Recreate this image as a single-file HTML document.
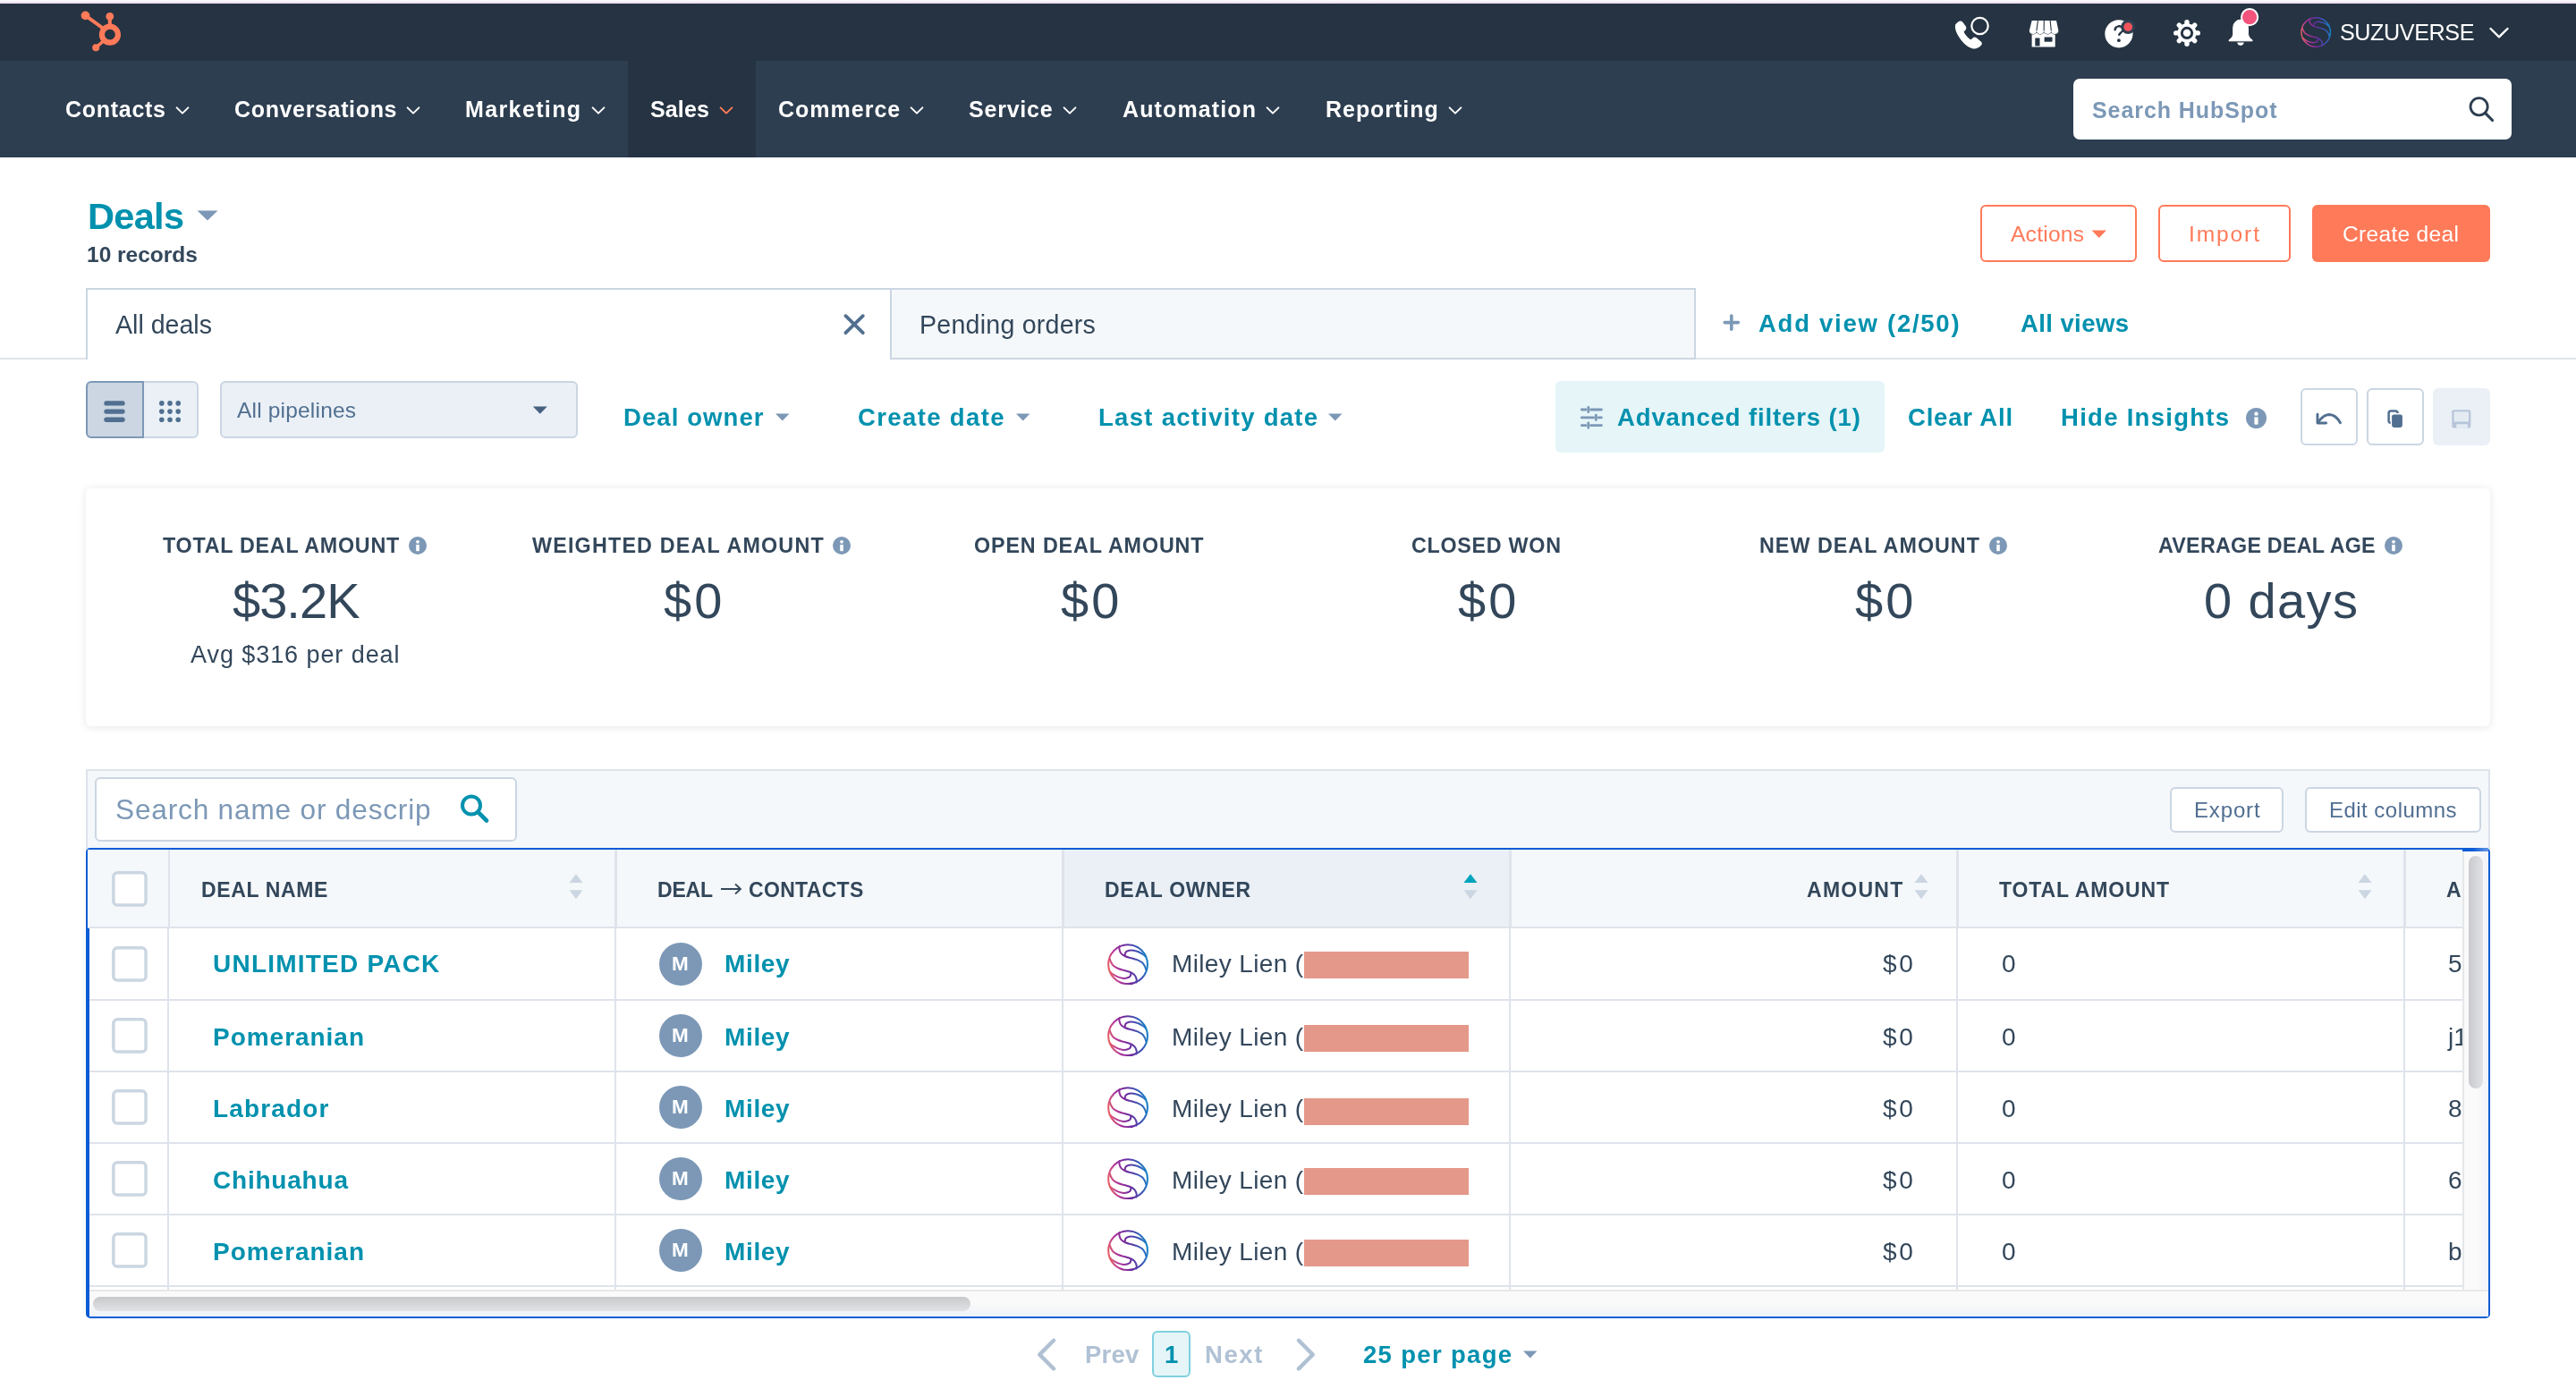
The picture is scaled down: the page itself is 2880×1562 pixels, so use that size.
<!DOCTYPE html>
<html><head><meta charset="utf-8"><title>Deals</title>
<style>
html,body{margin:0;padding:0;}
body{width:2880px;height:1562px;position:relative;overflow:hidden;background:#fff;font-family:"Liberation Sans",sans-serif;}
.a{position:absolute;box-sizing:border-box;display:block;}
.t{position:absolute;white-space:nowrap;display:block;will-change:transform;}
</style></head><body>
<div class="a" style="left:0px;top:0px;width:2880px;height:4px;background:linear-gradient(#fdfbfd 0,#fbf7fb 30%,#efe6f3 60%,#e9e0ee 100%);"></div>
<div class="a" style="left:0px;top:4px;width:2880px;height:64px;background:#253342;"></div>
<div class="a" style="left:0px;top:68px;width:2880px;height:108px;background:#2d3e50;"></div>
<div class="a" style="left:702px;top:68px;width:143px;height:108px;background:#253342;"></div>
<svg class="a" style="left:85px;top:8px;" width="60" height="56" viewBox="0 0 60 56"><g fill="none" stroke="#ff7a59" stroke-linecap="round">
<circle cx="37.9" cy="30.7" r="9" stroke-width="6.2"/>
<line x1="37.8" y1="10.4" x2="37.8" y2="21" stroke-width="4"/>
<line x1="10.5" y1="9.4" x2="30" y2="23.5" stroke-width="4"/>
<line x1="22.2" y1="45.2" x2="30.5" y2="38" stroke-width="3.6"/></g>
<g fill="#ff7a59"><circle cx="37.8" cy="10.4" r="4.4"/><circle cx="10.5" cy="9.4" r="4.9"/><circle cx="22.2" cy="45.2" r="4"/></g></svg>
<span class="t" style="left:73.0px;top:110.0px;font-size:25px;line-height:25px;color:#fff;font-weight:700;letter-spacing:0.72px;">Contacts</span>
<svg class="a" style="left:194.3px;top:117px;" width="20" height="14" viewBox="0 0 20 14"><path d="M3.6 3.4 L10 9.6 L16.4 3.4" fill="none" stroke="#fff" stroke-width="2" stroke-linecap="round" stroke-linejoin="round"/></svg>
<span class="t" style="left:261.6px;top:110.0px;font-size:25px;line-height:25px;color:#fff;font-weight:700;letter-spacing:0.65px;">Conversations</span>
<svg class="a" style="left:452.3px;top:117px;" width="20" height="14" viewBox="0 0 20 14"><path d="M3.6 3.4 L10 9.6 L16.4 3.4" fill="none" stroke="#fff" stroke-width="2" stroke-linecap="round" stroke-linejoin="round"/></svg>
<span class="t" style="left:520.4px;top:110.0px;font-size:25px;line-height:25px;color:#fff;font-weight:700;letter-spacing:1.38px;">Marketing</span>
<svg class="a" style="left:658.8px;top:117px;" width="20" height="14" viewBox="0 0 20 14"><path d="M3.6 3.4 L10 9.6 L16.4 3.4" fill="none" stroke="#fff" stroke-width="2" stroke-linecap="round" stroke-linejoin="round"/></svg>
<span class="t" style="left:726.7px;top:110.0px;font-size:25px;line-height:25px;color:#fff;font-weight:700;letter-spacing:0.14px;">Sales</span>
<svg class="a" style="left:801.9px;top:117px;" width="20" height="14" viewBox="0 0 20 14"><path d="M3.6 3.4 L10 9.6 L16.4 3.4" fill="none" stroke="#ff7a59" stroke-width="2" stroke-linecap="round" stroke-linejoin="round"/></svg>
<span class="t" style="left:869.8px;top:110.0px;font-size:25px;line-height:25px;color:#fff;font-weight:700;letter-spacing:1.00px;">Commerce</span>
<svg class="a" style="left:1015.3px;top:117px;" width="20" height="14" viewBox="0 0 20 14"><path d="M3.6 3.4 L10 9.6 L16.4 3.4" fill="none" stroke="#fff" stroke-width="2" stroke-linecap="round" stroke-linejoin="round"/></svg>
<span class="t" style="left:1083.3px;top:110.0px;font-size:25px;line-height:25px;color:#fff;font-weight:700;letter-spacing:0.79px;">Service</span>
<svg class="a" style="left:1186.3px;top:117px;" width="20" height="14" viewBox="0 0 20 14"><path d="M3.6 3.4 L10 9.6 L16.4 3.4" fill="none" stroke="#fff" stroke-width="2" stroke-linecap="round" stroke-linejoin="round"/></svg>
<span class="t" style="left:1255.0px;top:110.0px;font-size:25px;line-height:25px;color:#fff;font-weight:700;letter-spacing:1.13px;">Automation</span>
<svg class="a" style="left:1413.3px;top:117px;" width="20" height="14" viewBox="0 0 20 14"><path d="M3.6 3.4 L10 9.6 L16.4 3.4" fill="none" stroke="#fff" stroke-width="2" stroke-linecap="round" stroke-linejoin="round"/></svg>
<span class="t" style="left:1482.0px;top:110.0px;font-size:25px;line-height:25px;color:#fff;font-weight:700;letter-spacing:0.96px;">Reporting</span>
<svg class="a" style="left:1617.0px;top:117px;" width="20" height="14" viewBox="0 0 20 14"><path d="M3.6 3.4 L10 9.6 L16.4 3.4" fill="none" stroke="#fff" stroke-width="2" stroke-linecap="round" stroke-linejoin="round"/></svg>
<svg class="a" style="left:2182px;top:14px;" width="46" height="44" viewBox="0 0 46 44"><path d="M4.6 14.2c-.5 3 .6 8.5 5.8 15.3 5 6.5 10.3 9.7 13.6 10.3 2.5.4 6.3-1.300 8.400-3.500 1-1.100 .9-2.300-.1-3.300l-5-4.200c-1.100-.9-2.300-.8-3.300.1l-2.600 2.400c-2.600-1.300-6.900-5.700-8.700-9.700l2.400-2.600c.9-1 1-2.200.1-3.300l-3.600-4.700c-.9-1.100-2.400-1.300-3.500-.4-1.800 1.300-3.200 2.200-3.500 3.600z" fill="#fff" stroke="#fff" stroke-width="1.300" stroke-linejoin="round"/>
<circle cx="31.500" cy="15" r="9.200" fill="#253342" stroke="#fff" stroke-width="2.200"/></svg>
<svg class="a" style="left:2266px;top:20px;" width="38" height="36" viewBox="0 0 38 36"><g fill="#fff"><rect x="5.6" y="16.5" width="26.1" height="16"/>
<path d="M5.6 2.900h27.400l2.400 11.300a4.070 3.700 0 0 1 -8.150 0a4.070 3.700 0 0 1 -8.150 0a4.070 3.700 0 0 1 -8.150 0a4.070 3.700 0 0 1 -8.150 0z" stroke="#253342" stroke-width="1.100" paint-order="stroke"/></g>
<g stroke="#253342" stroke-width="1.100" fill="none"><path d="M12.500 2.500L10.900 14.400M19.300 2.500L19.100 14.400M26.100 2.500L27.300 14.400"/></g>
<g fill="#253342"><rect x="9.300" y="22.500" width="5.200" height="8.900"/><rect x="19.600" y="21.500" width="8.900" height="5.200"/></g></svg>
<svg class="a" style="left:2350px;top:18px;" width="40" height="40" viewBox="0 0 40 40"><circle cx="18.9" cy="19.8" r="15.6" fill="#fff"/>
<path d="M14.6 15.2c.4-2.600 2.300-3.900 4.500-3.900 2.500 0 4.300 1.500 4.300 3.700 0 3.300-4.400 3.500-4.400 7.300" fill="none" stroke="#253342" stroke-width="2.500" stroke-linecap="round" stroke-dasharray="3.400 2.100"/>
<circle cx="18.900" cy="27.200" r="1.900" fill="#253342"/>
<circle cx="29.200" cy="12.100" r="8" fill="#2e3f50"/><circle cx="29.200" cy="12.100" r="4.900" fill="#f2545b"/></svg>
<svg class="a" style="left:2425px;top:17px;" width="40" height="40" viewBox="0 0 40 40"><g transform="translate(20 19.900)"><g stroke="#fff" stroke-width="5.400" stroke-linecap="round"><line x1="0" y1="0" x2="12.30" y2="0.00"/><line x1="0" y1="0" x2="8.70" y2="8.70"/><line x1="0" y1="0" x2="0.00" y2="12.30"/><line x1="0" y1="0" x2="-8.70" y2="8.70"/><line x1="0" y1="0" x2="-12.30" y2="0.00"/><line x1="0" y1="0" x2="-8.70" y2="-8.70"/><line x1="0" y1="0" x2="-0.00" y2="-12.30"/><line x1="0" y1="0" x2="8.70" y2="-8.70"/></g><circle r="10.600" fill="#fff"/><circle r="7.100" fill="#253342"/><circle r="4.200" fill="#fff"/></g></svg>
<svg class="a" style="left:2486px;top:4px;" width="44" height="54" viewBox="0 0 44 54"><path d="M10.700 26.500a8.400 8.400 0 0 1 16.800 0v7c0 3 1.500 5 4.600 7.300v1h-26v-1c3.100-2.300 4.600-4.300 4.600-7.300z" fill="#fff" stroke="#fff" stroke-width="1" stroke-linejoin="round"/>
<path d="M15.300 43.600h7.400c0 2-1.600 3.300-3.700 3.300s-3.700-1.300-3.700-3.300z" fill="#fff"/>
<circle cx="29.100" cy="15.200" r="9.100" fill="#f2547d" stroke="#fff" stroke-width="2"/></svg>
<svg class="a" style="left:2569px;top:16px;" width="40" height="40" viewBox="0 0 40 40"><defs><linearGradient id="g0" gradientUnits="userSpaceOnUse" x1="-17" y1="3" x2="17" y2="-3"><stop offset="0" stop-color="#ea635e"/><stop offset=".22" stop-color="#b5379a"/><stop offset=".5" stop-color="#6e2a9d"/><stop offset=".78" stop-color="#3a55b4"/><stop offset="1" stop-color="#1488c9"/></linearGradient></defs>
<g transform="translate(20.2 20) scale(1.0000)" fill="none" stroke="url(#g0)" stroke-width="1.5" stroke-linecap="round"><circle cx="0" cy="0" r="16.250"/><path d="M-6.97 -15.00C-7.00 -14.57 -7.37 -13.41 -7.14 -12.41C-6.91 -11.41 -6.43 -9.97 -5.61 -9.01C-4.79 -8.05 -3.63 -7.28 -2.21 -6.63C-0.79 -5.98 1.19 -5.61 2.89 -5.10C4.59 -4.59 6.46 -4.22 7.99 -3.57C9.52 -2.92 11.02 -2.15 12.07 -1.19C13.12 -0.23 13.81 1.31 14.28 2.21C14.75 3.11 14.80 3.87 14.90 4.20M-2.55 -7.00C-2.44 -7.50 -2.44 -9.30 -1.87 -10.03C-1.30 -10.76 -0.23 -11.13 0.85 -11.39C1.93 -11.65 3.29 -11.73 4.59 -11.56C5.89 -11.39 7.37 -10.91 8.67 -10.37C9.97 -9.83 11.42 -8.99 12.41 -8.33C13.40 -7.67 14.23 -6.72 14.60 -6.40M6.97 15.00C7.00 14.57 7.37 13.41 7.14 12.41C6.91 11.41 6.43 9.97 5.61 9.01C4.79 8.05 3.63 7.28 2.21 6.63C0.79 5.98 -1.19 5.61 -2.89 5.10C-4.59 4.59 -6.46 4.22 -7.99 3.57C-9.52 2.92 -11.02 2.15 -12.07 1.19C-13.12 0.23 -13.81 -1.31 -14.28 -2.21C-14.75 -3.11 -14.80 -3.87 -14.90 -4.20M2.55 7.00C2.44 7.50 2.44 9.30 1.87 10.03C1.30 10.76 0.23 11.13 -0.85 11.39C-1.93 11.65 -3.29 11.73 -4.59 11.56C-5.89 11.39 -7.37 10.91 -8.67 10.37C-9.97 9.83 -11.42 8.99 -12.41 8.33C-13.40 7.67 -14.23 6.72 -14.60 6.40"/></g></svg>
<span class="t" style="left:2616.0px;top:24.0px;font-size:25.2px;line-height:25.2px;color:#fff;letter-spacing:-0.44px;">SUZUVERSE</span>
<svg class="a" style="left:2780px;top:28px;" width="28" height="18" viewBox="0 0 28 18"><path d="M4.500 4 L14 13.300 L23.500 4" fill="none" stroke="#fff" stroke-width="2.400" stroke-linecap="round" stroke-linejoin="round"/></svg>
<div class="a" style="left:2318px;top:88px;width:490px;height:68px;background:#fff;border-radius:7px;"></div>
<span class="t" style="left:2339.0px;top:110.8px;font-size:25px;line-height:25px;color:#7c98b6;font-weight:700;letter-spacing:0.93px;">Search HubSpot</span>
<svg class="a" style="left:2756px;top:104px;" width="36" height="36" viewBox="0 0 36 36"><circle cx="15.600" cy="15.300" r="9.600" fill="none" stroke="#2d3e50" stroke-width="2.800"/><line x1="22.500" y1="22.300" x2="30.500" y2="30.500" stroke="#2d3e50" stroke-width="3.200" stroke-linecap="round"/></svg>
<span class="t" style="left:97.5px;top:220.9px;font-size:41.5px;line-height:41.5px;color:#0091ae;font-weight:700;letter-spacing:-0.69px;">Deals</span>
<svg class="a" style="left:220px;top:234px;" width="24" height="14" viewBox="0 0 24 14"><path d="M0.500 1.500h23l-11.500 11z" fill="#7c98b6"/></svg>
<span class="t" style="left:96.5px;top:273.3px;font-size:24.5px;line-height:24.5px;color:#33475b;font-weight:700;">10 records</span>
<div class="a" style="left:2214px;top:229px;width:175px;height:64px;border:2px solid #ff7a59;border-radius:6px;background:#fff;"></div>
<span class="t" style="left:2248.0px;top:249.5px;font-size:24.6px;line-height:24.6px;color:#ff7a59;letter-spacing:0.22px;">Actions</span>
<svg class="a" style="left:2337px;top:256px;" width="20" height="12" viewBox="0 0 20 12"><path d="M1.500 1.500h16.500l-8.250 8.500z" fill="#ff7a59"/></svg>
<div class="a" style="left:2413px;top:229px;width:148px;height:64px;border:2px solid #ff7a59;border-radius:6px;background:#fff;"></div>
<span class="t" style="left:2447.4px;top:249.5px;font-size:24.6px;line-height:24.6px;color:#ff7a59;letter-spacing:1.86px;">Import</span>
<div class="a" style="left:2585px;top:229px;width:199px;height:64px;background:#ff7a59;border-radius:6px;"></div>
<span class="t" style="left:2619.0px;top:249.5px;font-size:24.6px;line-height:24.6px;color:#fff;letter-spacing:0.28px;">Create deal</span>
<div class="a" style="left:0px;top:400px;width:2880px;height:2px;background:#dfe3eb;"></div>
<div class="a" style="left:96px;top:322px;width:901px;height:80px;background:#fff;border:2px solid #cbd6e2;border-bottom:none;"></div>
<div class="a" style="left:997px;top:322px;width:899px;height:80px;background:#f5f8fa;border:2px solid #cbd6e2;border-left:none;"></div>
<span class="t" style="left:128.5px;top:349.0px;font-size:28.6px;line-height:28.6px;color:#33475b;letter-spacing:-0.01px;">All deals</span>
<svg class="a" style="left:940px;top:348px;" width="30" height="30" viewBox="0 0 30 30"><path d="M5.400 5.200L24.800 24.200M24.800 5.200L5.400 24.200" stroke="#516f90" stroke-width="3.800" stroke-linecap="round"/></svg>
<span class="t" style="left:1028.0px;top:349.0px;font-size:28.6px;line-height:28.6px;color:#33475b;letter-spacing:0.23px;">Pending orders</span>
<svg class="a" style="left:1922px;top:347px;" width="28" height="28" viewBox="0 0 28 28"><path d="M13.800 6V21.200M6.200 13.600H21.400" stroke="#7c98b6" stroke-width="3.600" stroke-linecap="round"/></svg>
<span class="t" style="left:1965.8px;top:348.0px;font-size:27.5px;line-height:27.5px;color:#0091ae;font-weight:700;letter-spacing:1.74px;">Add view (2/50)</span>
<span class="t" style="left:2258.6px;top:348.0px;font-size:27.5px;line-height:27.5px;color:#0091ae;font-weight:700;letter-spacing:0.41px;">All views</span>
<div class="a" style="left:96px;top:426px;width:65px;height:64px;background:#cbd6e2;border:2px solid #7c98b6;border-radius:6px 0 0 6px;"></div>
<div class="a" style="left:161px;top:426px;width:61px;height:64px;background:#eaf0f6;border:2px solid #cbd6e2;border-left:none;border-radius:0 6px 6px 0;"></div>
<svg class="a" style="left:114px;top:446px;" width="28" height="28" viewBox="0 0 28 28"><g stroke="#516f90" stroke-width="5.400" stroke-linecap="round"><line x1="5" y1="4.900" x2="23" y2="4.900"/><line x1="5" y1="14.100" x2="23" y2="14.100"/><line x1="5" y1="23.300" x2="23" y2="23.300"/></g></svg>
<svg class="a" style="left:177px;top:446px;" width="28" height="30" viewBox="0 0 28 30"><g fill="#516f90"><circle cx="3.8" cy="4.9" r="2.800"/><circle cx="3.8" cy="14.1" r="2.800"/><circle cx="3.8" cy="23.299999999999997" r="2.800"/><circle cx="13.0" cy="4.9" r="2.800"/><circle cx="13.0" cy="14.1" r="2.800"/><circle cx="13.0" cy="23.299999999999997" r="2.800"/><circle cx="22.2" cy="4.9" r="2.800"/><circle cx="22.2" cy="14.1" r="2.800"/><circle cx="22.2" cy="23.299999999999997" r="2.800"/></g></svg>
<div class="a" style="left:246px;top:426px;width:400px;height:64px;background:#eaf0f6;border:2px solid #cbd6e2;border-radius:6px;"></div>
<span class="t" style="left:264.5px;top:446.8px;font-size:24.5px;line-height:24.5px;color:#516f90;letter-spacing:0.19px;">All pipelines</span>
<svg class="a" style="left:594px;top:452.5px;" width="20" height="12" viewBox="0 0 20 12"><path d="M1.800 1.500h16l-8 8.300z" fill="#45617f"/></svg>
<span class="t" style="left:696.5px;top:452.7px;font-size:27.5px;line-height:27.5px;color:#0091ae;font-weight:700;letter-spacing:1.09px;">Deal owner</span>
<svg class="a" style="left:866px;top:461px;" width="18" height="11" viewBox="0 0 18 11"><path d="M1 1.500h15.500l-7.750 8z" fill="#7c98b6"/></svg>
<span class="t" style="left:958.5px;top:452.7px;font-size:27.5px;line-height:27.5px;color:#0091ae;font-weight:700;letter-spacing:1.37px;">Create date</span>
<svg class="a" style="left:1135px;top:461px;" width="18" height="11" viewBox="0 0 18 11"><path d="M1 1.500h15.500l-7.750 8z" fill="#7c98b6"/></svg>
<span class="t" style="left:1227.5px;top:452.7px;font-size:27.5px;line-height:27.5px;color:#0091ae;font-weight:700;letter-spacing:1.29px;">Last activity date</span>
<svg class="a" style="left:1484px;top:461px;" width="18" height="11" viewBox="0 0 18 11"><path d="M1 1.500h15.500l-7.750 8z" fill="#7c98b6"/></svg>
<div class="a" style="left:1739px;top:426px;width:368px;height:80px;background:#e5f5f8;border-radius:6px;"></div>
<svg class="a" style="left:1766px;top:452px;" width="28" height="28" viewBox="0 0 28 28"><g stroke="#7c98b6" stroke-width="2.800" stroke-linecap="round" fill="none">
<path d="M2.300 6H7M12.600 6H24.500M2.300 14.900H15.600M21 14.900H24.500M2.300 23.600H7M12.600 23.600H24.500"/>
<path d="M9.800 3.300V8.700M18.300 12.200V17.600M9.800 20.900V26.300"/></g></svg>
<span class="t" style="left:1808.4px;top:452.7px;font-size:27.5px;line-height:27.5px;color:#0091ae;font-weight:700;letter-spacing:0.88px;">Advanced filters (1)</span>
<span class="t" style="left:2132.5px;top:452.7px;font-size:27.5px;line-height:27.5px;color:#0091ae;font-weight:700;letter-spacing:0.81px;">Clear All</span>
<span class="t" style="left:2304.0px;top:452.7px;font-size:27.5px;line-height:27.5px;color:#0091ae;font-weight:700;letter-spacing:1.28px;">Hide Insights</span>
<svg class="a" style="left:2509.5px;top:454.5px;" width="25.0" height="25.0" viewBox="0 0 25.0 25.0"><circle cx="12.5" cy="12.5" r="11.5" fill="#7c98b6"/><circle cx="12.5" cy="7.67" r="2.19" fill="#fff"/><rect x="10.43" y="11.35" width="4.14" height="8.28" fill="#fff"/></svg>
<div class="a" style="left:2572px;top:434px;width:64px;height:64px;background:#fff;border:2px solid #cbd6e2;border-radius:6px;"></div>
<div class="a" style="left:2646px;top:434px;width:64px;height:64px;background:#fff;border:2px solid #cbd6e2;border-radius:6px;"></div>
<div class="a" style="left:2720px;top:434px;width:64px;height:64px;background:#eaf0f6;border-radius:6px;"></div>
<svg class="a" style="left:2588px;top:452px;" width="32" height="28" viewBox="0 0 32 28"><g fill="none" stroke="#516f90" stroke-width="2.900" stroke-linecap="round" stroke-linejoin="round"><path d="M3 11.200V21H12.600"/><path d="M3.600 20.300Q9.500 11.600 16 11.500Q23.500 11.600 28.500 20.800"/></g></svg>
<svg class="a" style="left:2663px;top:450px;" width="30" height="32" viewBox="0 0 30 32"><rect x="7.600" y="9.400" width="10" height="13.500" rx="2.600" fill="none" stroke="#516f90" stroke-width="2.500"/><rect x="10.400" y="12.700" width="13.200" height="15.900" rx="3" fill="#516f90" stroke="#fff" stroke-width="1.400"/></svg>
<svg class="a" style="left:2737px;top:451px;" width="30" height="30" viewBox="0 0 30 30"><path d="M6.300 7.200H23.300Q25.300 7.200 25.300 9.200V25.600Q25.300 27.600 23.300 27.600H6.300Q4.300 27.600 4.300 25.600V9.200Q4.300 7.200 6.300 7.200Z" fill="#b7c5da"/><rect x="6.600" y="9.300" width="16.400" height="11.200" fill="#e4ebf3"/><rect x="9.300" y="23.300" width="12.600" height="4.400" fill="#e4ebf3"/></svg>
<div class="a" style="left:96px;top:546px;width:2688px;height:266px;background:#fff;border-radius:6px;box-shadow:0 1px 8px 1px rgba(45,62,80,.10);"></div>
<span class="t" style="left:181.7px;top:598.7px;font-size:23.3px;line-height:23.3px;color:#33475b;font-weight:700;letter-spacing:0.74px;">TOTAL DEAL AMOUNT</span>
<svg class="a" style="left:455.5px;top:599.4px;" width="22" height="22" viewBox="0 0 22 22"><circle cx="11" cy="11" r="10" fill="#7c98b6"/><circle cx="11" cy="6.80" r="1.90" fill="#fff"/><rect x="9.20" y="10.00" width="3.60" height="7.20" fill="#fff"/></svg>
<span class="t" style="left:259.8px;top:644.2px;font-size:56px;line-height:56px;color:#33475b;letter-spacing:-0.96px;">$3.2K</span>
<span class="t" style="left:595.0px;top:598.7px;font-size:23.3px;line-height:23.3px;color:#33475b;font-weight:700;letter-spacing:1.20px;">WEIGHTED DEAL AMOUNT</span>
<svg class="a" style="left:930.1px;top:599.4px;" width="22" height="22" viewBox="0 0 22 22"><circle cx="11" cy="11" r="10" fill="#7c98b6"/><circle cx="11" cy="6.80" r="1.90" fill="#fff"/><rect x="9.20" y="10.00" width="3.60" height="7.20" fill="#fff"/></svg>
<span class="t" style="left:742.2px;top:644.2px;font-size:56px;line-height:56px;color:#33475b;letter-spacing:3.21px;">$0</span>
<span class="t" style="left:1089.4px;top:598.7px;font-size:23.3px;line-height:23.3px;color:#33475b;font-weight:700;letter-spacing:0.88px;">OPEN DEAL AMOUNT</span>
<span class="t" style="left:1186.2px;top:644.2px;font-size:56px;line-height:56px;color:#33475b;letter-spacing:3.21px;">$0</span>
<span class="t" style="left:1578.0px;top:598.7px;font-size:23.3px;line-height:23.3px;color:#33475b;font-weight:700;letter-spacing:0.72px;">CLOSED WON</span>
<span class="t" style="left:1630.2px;top:644.2px;font-size:56px;line-height:56px;color:#33475b;letter-spacing:3.21px;">$0</span>
<span class="t" style="left:1967.0px;top:598.7px;font-size:23.3px;line-height:23.3px;color:#33475b;font-weight:700;letter-spacing:1.02px;">NEW DEAL AMOUNT</span>
<svg class="a" style="left:2222.5px;top:599.4px;" width="22" height="22" viewBox="0 0 22 22"><circle cx="11" cy="11" r="10" fill="#7c98b6"/><circle cx="11" cy="6.80" r="1.90" fill="#fff"/><rect x="9.20" y="10.00" width="3.60" height="7.20" fill="#fff"/></svg>
<span class="t" style="left:2074.2px;top:644.2px;font-size:56px;line-height:56px;color:#33475b;letter-spacing:3.21px;">$0</span>
<span class="t" style="left:2412.6px;top:598.7px;font-size:23.3px;line-height:23.3px;color:#33475b;font-weight:700;letter-spacing:0.24px;">AVERAGE DEAL AGE</span>
<svg class="a" style="left:2664.8px;top:599.4px;" width="22" height="22" viewBox="0 0 22 22"><circle cx="11" cy="11" r="10" fill="#7c98b6"/><circle cx="11" cy="6.80" r="1.90" fill="#fff"/><rect x="9.20" y="10.00" width="3.60" height="7.20" fill="#fff"/></svg>
<span class="t" style="left:2463.8px;top:644.2px;font-size:56px;line-height:56px;color:#33475b;letter-spacing:1.40px;">0 days</span>
<span class="t" style="left:213.2px;top:719.4px;font-size:27px;line-height:27px;color:#33475b;letter-spacing:0.93px;">Avg $316 per deal</span>
<div class="a" style="left:96px;top:860px;width:2688px;height:92px;background:#f5f8fa;border:2px solid #dfe3eb;border-bottom:none;"></div>
<div class="a" style="left:106px;top:869px;width:472px;height:72px;background:#fff;border:2px solid #cbd6e2;border-radius:6px;"></div>
<div class="a" style="left:129px;top:880px;width:351px;height:50px;overflow:hidden;">
<span class="t" style="left:0.0px;top:10.3px;font-size:31.6px;line-height:31.6px;color:#7c98b6;letter-spacing:0.82px;">Search name or description</span>
</div>
<svg class="a" style="left:511px;top:885.3px;" width="40" height="40" viewBox="0 0 40 40"><circle cx="16" cy="15.500" r="10" fill="none" stroke="#0091ae" stroke-width="4"/><line x1="23.500" y1="23" x2="33" y2="32.500" stroke="#0091ae" stroke-width="4.600" stroke-linecap="round"/></svg>
<div class="a" style="left:2426px;top:879.5px;width:127px;height:51px;background:#fff;border:2px solid #cbd6e2;border-radius:6px;"></div>
<span class="t" style="left:2453.0px;top:893.7px;font-size:24px;line-height:24px;color:#506e91;letter-spacing:0.85px;">Export</span>
<div class="a" style="left:2577px;top:879.5px;width:197px;height:51px;background:#fff;border:2px solid #cbd6e2;border-radius:6px;"></div>
<span class="t" style="left:2604.3px;top:893.7px;font-size:24px;line-height:24px;color:#506e91;letter-spacing:0.47px;">Edit columns</span>
<div class="a" style="left:96px;top:948px;width:2688px;height:526px;background:#fff;border:2px solid #0b5cd6;border-left-width:4px;border-radius:5px;"></div>
<div class="a" style="left:98px;top:950px;width:2655px;height:87px;background:#f5f8fa;"></div>
<div class="a" style="left:1188px;top:950px;width:500px;height:87px;background:#eaf0f6;"></div>
<div class="a" style="left:98px;top:1036px;width:2655px;height:2px;background:#dfe3eb;"></div>
<div class="a" style="left:100px;top:1117px;width:2653px;height:2px;background:#dfe3eb;"></div>
<div class="a" style="left:100px;top:1197px;width:2653px;height:2px;background:#dfe3eb;"></div>
<div class="a" style="left:100px;top:1277px;width:2653px;height:2px;background:#dfe3eb;"></div>
<div class="a" style="left:100px;top:1357px;width:2653px;height:2px;background:#dfe3eb;"></div>
<div class="a" style="left:100px;top:1437px;width:2653px;height:2px;background:#dfe3eb;"></div>
<div class="a" style="left:188px;top:950px;width:2px;height:87px;background:#dfe3eb;"></div>
<div class="a" style="left:187px;top:1037px;width:2px;height:405px;background:#dfe3eb;"></div>
<div class="a" style="left:687px;top:950px;width:3px;height:87px;background:#dfe3eb;"></div>
<div class="a" style="left:687px;top:1037px;width:2px;height:405px;background:#dfe3eb;"></div>
<div class="a" style="left:1187px;top:950px;width:3px;height:87px;background:#dfe3eb;"></div>
<div class="a" style="left:1187px;top:1037px;width:2px;height:405px;background:#dfe3eb;"></div>
<div class="a" style="left:1687px;top:950px;width:3px;height:87px;background:#dfe3eb;"></div>
<div class="a" style="left:1687px;top:1037px;width:2px;height:405px;background:#dfe3eb;"></div>
<div class="a" style="left:2187px;top:950px;width:3px;height:87px;background:#dfe3eb;"></div>
<div class="a" style="left:2187px;top:1037px;width:2px;height:405px;background:#dfe3eb;"></div>
<div class="a" style="left:2687px;top:950px;width:3px;height:87px;background:#dfe3eb;"></div>
<div class="a" style="left:2687px;top:1037px;width:2px;height:405px;background:#dfe3eb;"></div>
<svg class="a" style="left:125px;top:974px;" width="40" height="40" viewBox="0 0 40 40"><rect x="1.85" y="1.85" width="36.2" height="36.2" rx="4.4" fill="#fff" stroke="#cbd6e2" stroke-width="3.5"/></svg>
<span class="t" style="left:224.7px;top:984.0px;font-size:23px;line-height:23px;color:#33475b;font-weight:700;letter-spacing:0.62px;">DEAL NAME</span>
<svg class="a" style="left:636px;top:976px;" width="16" height="31" viewBox="0 0 16 31"><path d="M8 1.200L15.500 11.100H0.500z" fill="#cbd6e2"/><path d="M0.500 19.300H15.500L8 29.300z" fill="#cbd6e2"/></svg>
<span class="t" style="left:734.5px;top:984.0px;font-size:23px;line-height:23px;color:#33475b;font-weight:700;letter-spacing:-0.20px;">DEAL</span>
<svg class="a" style="left:805px;top:984px;" width="26" height="20" viewBox="0 0 26 20"><path d="M1 10h22M17 4.500l6 5.500-6 5.500" fill="none" stroke="#33475b" stroke-width="1.800"/></svg>
<span class="t" style="left:837.0px;top:984.0px;font-size:23px;line-height:23px;color:#33475b;font-weight:700;letter-spacing:0.32px;">CONTACTS</span>
<span class="t" style="left:1234.8px;top:984.0px;font-size:23px;line-height:23px;color:#33475b;font-weight:700;letter-spacing:0.72px;">DEAL OWNER</span>
<svg class="a" style="left:1636px;top:976px;" width="16" height="31" viewBox="0 0 16 31"><path d="M8 1.200L15.500 11.100H0.500z" fill="#00a4bd"/><path d="M0.500 19.300H15.500L8 29.300z" fill="#cbd6e2"/></svg>
<span class="t" style="left:2020.2px;top:984.0px;font-size:23px;line-height:23px;color:#33475b;font-weight:700;letter-spacing:1.27px;">AMOUNT</span>
<svg class="a" style="left:2140px;top:976px;" width="16" height="31" viewBox="0 0 16 31"><path d="M8 1.200L15.500 11.100H0.500z" fill="#cbd6e2"/><path d="M0.500 19.300H15.500L8 29.300z" fill="#cbd6e2"/></svg>
<span class="t" style="left:2234.9px;top:984.0px;font-size:23px;line-height:23px;color:#33475b;font-weight:700;letter-spacing:0.86px;">TOTAL AMOUNT</span>
<svg class="a" style="left:2636px;top:976px;" width="16" height="31" viewBox="0 0 16 31"><path d="M8 1.200L15.500 11.100H0.500z" fill="#cbd6e2"/><path d="M0.500 19.300H15.500L8 29.300z" fill="#cbd6e2"/></svg>
<span class="t" style="left:2734.6px;top:984.0px;font-size:23px;line-height:23px;color:#33475b;font-weight:700;">A</span>
<svg class="a" style="left:125px;top:1058.0px;" width="40" height="40" viewBox="0 0 40 40"><rect x="1.85" y="1.85" width="36.2" height="36.2" rx="4.4" fill="#fff" stroke="#cbd6e2" stroke-width="3.5"/></svg>
<span class="t" style="left:238.0px;top:1064.0px;font-size:28px;line-height:28px;color:#0091ae;font-weight:700;letter-spacing:1.22px;">UNLIMITED PACK</span>
<div class="a" style="left:737px;top:1053.8px;width:48px;height:48px;border-radius:50%;background:#7c98b6;"></div>
<span class="t" style="left:751.4px;top:1067.4px;font-size:22.5px;line-height:22.5px;color:#fff;font-weight:700;">M</span>
<span class="t" style="left:810.0px;top:1064.0px;font-size:28px;line-height:28px;color:#0091ae;font-weight:700;letter-spacing:0.64px;">Miley</span>
<svg class="a" style="left:1236px;top:1052.8px;" width="50" height="50" viewBox="0 0 50 50"><defs><linearGradient id="g1" gradientUnits="userSpaceOnUse" x1="-17" y1="3" x2="17" y2="-3"><stop offset="0" stop-color="#ea635e"/><stop offset=".22" stop-color="#b5379a"/><stop offset=".5" stop-color="#6e2a9d"/><stop offset=".78" stop-color="#3a55b4"/><stop offset="1" stop-color="#1488c9"/></linearGradient></defs>
<g transform="translate(25.05 25.2) scale(1.3471)" fill="none" stroke="url(#g1)" stroke-width="1.5" stroke-linecap="round"><circle cx="0" cy="0" r="16.250"/><path d="M-6.97 -15.00C-7.00 -14.57 -7.37 -13.41 -7.14 -12.41C-6.91 -11.41 -6.43 -9.97 -5.61 -9.01C-4.79 -8.05 -3.63 -7.28 -2.21 -6.63C-0.79 -5.98 1.19 -5.61 2.89 -5.10C4.59 -4.59 6.46 -4.22 7.99 -3.57C9.52 -2.92 11.02 -2.15 12.07 -1.19C13.12 -0.23 13.81 1.31 14.28 2.21C14.75 3.11 14.80 3.87 14.90 4.20M-2.55 -7.00C-2.44 -7.50 -2.44 -9.30 -1.87 -10.03C-1.30 -10.76 -0.23 -11.13 0.85 -11.39C1.93 -11.65 3.29 -11.73 4.59 -11.56C5.89 -11.39 7.37 -10.91 8.67 -10.37C9.97 -9.83 11.42 -8.99 12.41 -8.33C13.40 -7.67 14.23 -6.72 14.60 -6.40M6.97 15.00C7.00 14.57 7.37 13.41 7.14 12.41C6.91 11.41 6.43 9.97 5.61 9.01C4.79 8.05 3.63 7.28 2.21 6.63C0.79 5.98 -1.19 5.61 -2.89 5.10C-4.59 4.59 -6.46 4.22 -7.99 3.57C-9.52 2.92 -11.02 2.15 -12.07 1.19C-13.12 0.23 -13.81 -1.31 -14.28 -2.21C-14.75 -3.11 -14.80 -3.87 -14.90 -4.20M2.55 7.00C2.44 7.50 2.44 9.30 1.87 10.03C1.30 10.76 0.23 11.13 -0.85 11.39C-1.93 11.65 -3.29 11.73 -4.59 11.56C-5.89 11.39 -7.37 10.91 -8.67 10.37C-9.97 9.83 -11.42 8.99 -12.41 8.33C-13.40 7.67 -14.23 6.72 -14.60 6.40"/></g></svg>
<span class="t" style="left:1309.7px;top:1064.0px;font-size:28px;line-height:28px;color:#33475b;letter-spacing:0.35px;">Miley Lien (</span>
<div class="a" style="left:1458px;top:1064.2px;width:184px;height:29.6px;background:#e4988a;"></div>
<span class="t" style="left:2105.0px;top:1064.0px;font-size:28px;line-height:28px;color:#33475b;letter-spacing:2.56px;">$0</span>
<span class="t" style="left:2237.7px;top:1064.0px;font-size:28px;line-height:28px;color:#33475b;">0</span>
<div class="a" style="left:2700px;top:1047.7px;width:52.500px;height:60px;overflow:hidden;">
<span class="t" style="left:36.8px;top:16.3px;font-size:28px;line-height:28px;color:#33475b;">5</span>
</div>
<svg class="a" style="left:125px;top:1138.0px;" width="40" height="40" viewBox="0 0 40 40"><rect x="1.85" y="1.85" width="36.2" height="36.2" rx="4.4" fill="#fff" stroke="#cbd6e2" stroke-width="3.5"/></svg>
<span class="t" style="left:238.0px;top:1145.9px;font-size:28px;line-height:28px;color:#0091ae;font-weight:700;letter-spacing:0.97px;">Pomeranian</span>
<div class="a" style="left:737px;top:1133.8px;width:48px;height:48px;border-radius:50%;background:#7c98b6;"></div>
<span class="t" style="left:751.4px;top:1147.4px;font-size:22.5px;line-height:22.5px;color:#fff;font-weight:700;">M</span>
<span class="t" style="left:810.0px;top:1145.9px;font-size:28px;line-height:28px;color:#0091ae;font-weight:700;letter-spacing:0.64px;">Miley</span>
<svg class="a" style="left:1236px;top:1132.8px;" width="50" height="50" viewBox="0 0 50 50"><defs><linearGradient id="g2" gradientUnits="userSpaceOnUse" x1="-17" y1="3" x2="17" y2="-3"><stop offset="0" stop-color="#ea635e"/><stop offset=".22" stop-color="#b5379a"/><stop offset=".5" stop-color="#6e2a9d"/><stop offset=".78" stop-color="#3a55b4"/><stop offset="1" stop-color="#1488c9"/></linearGradient></defs>
<g transform="translate(25.05 25.2) scale(1.3471)" fill="none" stroke="url(#g2)" stroke-width="1.5" stroke-linecap="round"><circle cx="0" cy="0" r="16.250"/><path d="M-6.97 -15.00C-7.00 -14.57 -7.37 -13.41 -7.14 -12.41C-6.91 -11.41 -6.43 -9.97 -5.61 -9.01C-4.79 -8.05 -3.63 -7.28 -2.21 -6.63C-0.79 -5.98 1.19 -5.61 2.89 -5.10C4.59 -4.59 6.46 -4.22 7.99 -3.57C9.52 -2.92 11.02 -2.15 12.07 -1.19C13.12 -0.23 13.81 1.31 14.28 2.21C14.75 3.11 14.80 3.87 14.90 4.20M-2.55 -7.00C-2.44 -7.50 -2.44 -9.30 -1.87 -10.03C-1.30 -10.76 -0.23 -11.13 0.85 -11.39C1.93 -11.65 3.29 -11.73 4.59 -11.56C5.89 -11.39 7.37 -10.91 8.67 -10.37C9.97 -9.83 11.42 -8.99 12.41 -8.33C13.40 -7.67 14.23 -6.72 14.60 -6.40M6.97 15.00C7.00 14.57 7.37 13.41 7.14 12.41C6.91 11.41 6.43 9.97 5.61 9.01C4.79 8.05 3.63 7.28 2.21 6.63C0.79 5.98 -1.19 5.61 -2.89 5.10C-4.59 4.59 -6.46 4.22 -7.99 3.57C-9.52 2.92 -11.02 2.15 -12.07 1.19C-13.12 0.23 -13.81 -1.31 -14.28 -2.21C-14.75 -3.11 -14.80 -3.87 -14.90 -4.20M2.55 7.00C2.44 7.50 2.44 9.30 1.87 10.03C1.30 10.76 0.23 11.13 -0.85 11.39C-1.93 11.65 -3.29 11.73 -4.59 11.56C-5.89 11.39 -7.37 10.91 -8.67 10.37C-9.97 9.83 -11.42 8.99 -12.41 8.33C-13.40 7.67 -14.23 6.72 -14.60 6.40"/></g></svg>
<span class="t" style="left:1309.7px;top:1145.9px;font-size:28px;line-height:28px;color:#33475b;letter-spacing:0.35px;">Miley Lien (</span>
<div class="a" style="left:1458px;top:1146.1px;width:184px;height:29.6px;background:#e4988a;"></div>
<span class="t" style="left:2105.0px;top:1145.9px;font-size:28px;line-height:28px;color:#33475b;letter-spacing:2.56px;">$0</span>
<span class="t" style="left:2237.7px;top:1145.9px;font-size:28px;line-height:28px;color:#33475b;">0</span>
<div class="a" style="left:2700px;top:1129.6px;width:52.500px;height:60px;overflow:hidden;">
<span class="t" style="left:36.8px;top:16.3px;font-size:28px;line-height:28px;color:#33475b;">j1</span>
</div>
<svg class="a" style="left:125px;top:1218.0px;" width="40" height="40" viewBox="0 0 40 40"><rect x="1.85" y="1.85" width="36.2" height="36.2" rx="4.4" fill="#fff" stroke="#cbd6e2" stroke-width="3.5"/></svg>
<span class="t" style="left:238.0px;top:1225.9px;font-size:28px;line-height:28px;color:#0091ae;font-weight:700;letter-spacing:1.16px;">Labrador</span>
<div class="a" style="left:737px;top:1213.8px;width:48px;height:48px;border-radius:50%;background:#7c98b6;"></div>
<span class="t" style="left:751.4px;top:1227.4px;font-size:22.5px;line-height:22.5px;color:#fff;font-weight:700;">M</span>
<span class="t" style="left:810.0px;top:1225.9px;font-size:28px;line-height:28px;color:#0091ae;font-weight:700;letter-spacing:0.64px;">Miley</span>
<svg class="a" style="left:1236px;top:1212.8px;" width="50" height="50" viewBox="0 0 50 50"><defs><linearGradient id="g3" gradientUnits="userSpaceOnUse" x1="-17" y1="3" x2="17" y2="-3"><stop offset="0" stop-color="#ea635e"/><stop offset=".22" stop-color="#b5379a"/><stop offset=".5" stop-color="#6e2a9d"/><stop offset=".78" stop-color="#3a55b4"/><stop offset="1" stop-color="#1488c9"/></linearGradient></defs>
<g transform="translate(25.05 25.2) scale(1.3471)" fill="none" stroke="url(#g3)" stroke-width="1.5" stroke-linecap="round"><circle cx="0" cy="0" r="16.250"/><path d="M-6.97 -15.00C-7.00 -14.57 -7.37 -13.41 -7.14 -12.41C-6.91 -11.41 -6.43 -9.97 -5.61 -9.01C-4.79 -8.05 -3.63 -7.28 -2.21 -6.63C-0.79 -5.98 1.19 -5.61 2.89 -5.10C4.59 -4.59 6.46 -4.22 7.99 -3.57C9.52 -2.92 11.02 -2.15 12.07 -1.19C13.12 -0.23 13.81 1.31 14.28 2.21C14.75 3.11 14.80 3.87 14.90 4.20M-2.55 -7.00C-2.44 -7.50 -2.44 -9.30 -1.87 -10.03C-1.30 -10.76 -0.23 -11.13 0.85 -11.39C1.93 -11.65 3.29 -11.73 4.59 -11.56C5.89 -11.39 7.37 -10.91 8.67 -10.37C9.97 -9.83 11.42 -8.99 12.41 -8.33C13.40 -7.67 14.23 -6.72 14.60 -6.40M6.97 15.00C7.00 14.57 7.37 13.41 7.14 12.41C6.91 11.41 6.43 9.97 5.61 9.01C4.79 8.05 3.63 7.28 2.21 6.63C0.79 5.98 -1.19 5.61 -2.89 5.10C-4.59 4.59 -6.46 4.22 -7.99 3.57C-9.52 2.92 -11.02 2.15 -12.07 1.19C-13.12 0.23 -13.81 -1.31 -14.28 -2.21C-14.75 -3.11 -14.80 -3.87 -14.90 -4.20M2.55 7.00C2.44 7.50 2.44 9.30 1.87 10.03C1.30 10.76 0.23 11.13 -0.85 11.39C-1.93 11.65 -3.29 11.73 -4.59 11.56C-5.89 11.39 -7.37 10.91 -8.67 10.37C-9.97 9.83 -11.42 8.99 -12.41 8.33C-13.40 7.67 -14.23 6.72 -14.60 6.40"/></g></svg>
<span class="t" style="left:1309.7px;top:1225.9px;font-size:28px;line-height:28px;color:#33475b;letter-spacing:0.35px;">Miley Lien (</span>
<div class="a" style="left:1458px;top:1228.0px;width:184px;height:29.6px;background:#e4988a;"></div>
<span class="t" style="left:2105.0px;top:1225.9px;font-size:28px;line-height:28px;color:#33475b;letter-spacing:2.56px;">$0</span>
<span class="t" style="left:2237.7px;top:1225.9px;font-size:28px;line-height:28px;color:#33475b;">0</span>
<div class="a" style="left:2700px;top:1209.6px;width:52.500px;height:60px;overflow:hidden;">
<span class="t" style="left:36.8px;top:16.3px;font-size:28px;line-height:28px;color:#33475b;">8</span>
</div>
<svg class="a" style="left:125px;top:1298.0px;" width="40" height="40" viewBox="0 0 40 40"><rect x="1.85" y="1.85" width="36.2" height="36.2" rx="4.4" fill="#fff" stroke="#cbd6e2" stroke-width="3.5"/></svg>
<span class="t" style="left:238.0px;top:1305.9px;font-size:28px;line-height:28px;color:#0091ae;font-weight:700;letter-spacing:0.79px;">Chihuahua</span>
<div class="a" style="left:737px;top:1293.8px;width:48px;height:48px;border-radius:50%;background:#7c98b6;"></div>
<span class="t" style="left:751.4px;top:1307.4px;font-size:22.5px;line-height:22.5px;color:#fff;font-weight:700;">M</span>
<span class="t" style="left:810.0px;top:1305.9px;font-size:28px;line-height:28px;color:#0091ae;font-weight:700;letter-spacing:0.64px;">Miley</span>
<svg class="a" style="left:1236px;top:1292.8px;" width="50" height="50" viewBox="0 0 50 50"><defs><linearGradient id="g4" gradientUnits="userSpaceOnUse" x1="-17" y1="3" x2="17" y2="-3"><stop offset="0" stop-color="#ea635e"/><stop offset=".22" stop-color="#b5379a"/><stop offset=".5" stop-color="#6e2a9d"/><stop offset=".78" stop-color="#3a55b4"/><stop offset="1" stop-color="#1488c9"/></linearGradient></defs>
<g transform="translate(25.05 25.2) scale(1.3471)" fill="none" stroke="url(#g4)" stroke-width="1.5" stroke-linecap="round"><circle cx="0" cy="0" r="16.250"/><path d="M-6.97 -15.00C-7.00 -14.57 -7.37 -13.41 -7.14 -12.41C-6.91 -11.41 -6.43 -9.97 -5.61 -9.01C-4.79 -8.05 -3.63 -7.28 -2.21 -6.63C-0.79 -5.98 1.19 -5.61 2.89 -5.10C4.59 -4.59 6.46 -4.22 7.99 -3.57C9.52 -2.92 11.02 -2.15 12.07 -1.19C13.12 -0.23 13.81 1.31 14.28 2.21C14.75 3.11 14.80 3.87 14.90 4.20M-2.55 -7.00C-2.44 -7.50 -2.44 -9.30 -1.87 -10.03C-1.30 -10.76 -0.23 -11.13 0.85 -11.39C1.93 -11.65 3.29 -11.73 4.59 -11.56C5.89 -11.39 7.37 -10.91 8.67 -10.37C9.97 -9.83 11.42 -8.99 12.41 -8.33C13.40 -7.67 14.23 -6.72 14.60 -6.40M6.97 15.00C7.00 14.57 7.37 13.41 7.14 12.41C6.91 11.41 6.43 9.97 5.61 9.01C4.79 8.05 3.63 7.28 2.21 6.63C0.79 5.98 -1.19 5.61 -2.89 5.10C-4.59 4.59 -6.46 4.22 -7.99 3.57C-9.52 2.92 -11.02 2.15 -12.07 1.19C-13.12 0.23 -13.81 -1.31 -14.28 -2.21C-14.75 -3.11 -14.80 -3.87 -14.90 -4.20M2.55 7.00C2.44 7.50 2.44 9.30 1.87 10.03C1.30 10.76 0.23 11.13 -0.85 11.39C-1.93 11.65 -3.29 11.73 -4.59 11.56C-5.89 11.39 -7.37 10.91 -8.67 10.37C-9.97 9.83 -11.42 8.99 -12.41 8.33C-13.40 7.67 -14.23 6.72 -14.60 6.40"/></g></svg>
<span class="t" style="left:1309.7px;top:1305.9px;font-size:28px;line-height:28px;color:#33475b;letter-spacing:0.35px;">Miley Lien (</span>
<div class="a" style="left:1458px;top:1306.1px;width:184px;height:29.6px;background:#e4988a;"></div>
<span class="t" style="left:2105.0px;top:1305.9px;font-size:28px;line-height:28px;color:#33475b;letter-spacing:2.56px;">$0</span>
<span class="t" style="left:2237.7px;top:1305.9px;font-size:28px;line-height:28px;color:#33475b;">0</span>
<div class="a" style="left:2700px;top:1289.6px;width:52.500px;height:60px;overflow:hidden;">
<span class="t" style="left:36.8px;top:16.3px;font-size:28px;line-height:28px;color:#33475b;">6</span>
</div>
<svg class="a" style="left:125px;top:1378.0px;" width="40" height="40" viewBox="0 0 40 40"><rect x="1.85" y="1.85" width="36.2" height="36.2" rx="4.4" fill="#fff" stroke="#cbd6e2" stroke-width="3.5"/></svg>
<span class="t" style="left:238.0px;top:1385.9px;font-size:28px;line-height:28px;color:#0091ae;font-weight:700;letter-spacing:0.97px;">Pomeranian</span>
<div class="a" style="left:737px;top:1373.8px;width:48px;height:48px;border-radius:50%;background:#7c98b6;"></div>
<span class="t" style="left:751.4px;top:1387.4px;font-size:22.5px;line-height:22.5px;color:#fff;font-weight:700;">M</span>
<span class="t" style="left:810.0px;top:1385.9px;font-size:28px;line-height:28px;color:#0091ae;font-weight:700;letter-spacing:0.64px;">Miley</span>
<svg class="a" style="left:1236px;top:1372.8px;" width="50" height="50" viewBox="0 0 50 50"><defs><linearGradient id="g5" gradientUnits="userSpaceOnUse" x1="-17" y1="3" x2="17" y2="-3"><stop offset="0" stop-color="#ea635e"/><stop offset=".22" stop-color="#b5379a"/><stop offset=".5" stop-color="#6e2a9d"/><stop offset=".78" stop-color="#3a55b4"/><stop offset="1" stop-color="#1488c9"/></linearGradient></defs>
<g transform="translate(25.05 25.2) scale(1.3471)" fill="none" stroke="url(#g5)" stroke-width="1.5" stroke-linecap="round"><circle cx="0" cy="0" r="16.250"/><path d="M-6.97 -15.00C-7.00 -14.57 -7.37 -13.41 -7.14 -12.41C-6.91 -11.41 -6.43 -9.97 -5.61 -9.01C-4.79 -8.05 -3.63 -7.28 -2.21 -6.63C-0.79 -5.98 1.19 -5.61 2.89 -5.10C4.59 -4.59 6.46 -4.22 7.99 -3.57C9.52 -2.92 11.02 -2.15 12.07 -1.19C13.12 -0.23 13.81 1.31 14.28 2.21C14.75 3.11 14.80 3.87 14.90 4.20M-2.55 -7.00C-2.44 -7.50 -2.44 -9.30 -1.87 -10.03C-1.30 -10.76 -0.23 -11.13 0.85 -11.39C1.93 -11.65 3.29 -11.73 4.59 -11.56C5.89 -11.39 7.37 -10.91 8.67 -10.37C9.97 -9.83 11.42 -8.99 12.41 -8.33C13.40 -7.67 14.23 -6.72 14.60 -6.40M6.97 15.00C7.00 14.57 7.37 13.41 7.14 12.41C6.91 11.41 6.43 9.97 5.61 9.01C4.79 8.05 3.63 7.28 2.21 6.63C0.79 5.98 -1.19 5.61 -2.89 5.10C-4.59 4.59 -6.46 4.22 -7.99 3.57C-9.52 2.92 -11.02 2.15 -12.07 1.19C-13.12 0.23 -13.81 -1.31 -14.28 -2.21C-14.75 -3.11 -14.80 -3.87 -14.90 -4.20M2.55 7.00C2.44 7.50 2.44 9.30 1.87 10.03C1.30 10.76 0.23 11.13 -0.85 11.39C-1.93 11.65 -3.29 11.73 -4.59 11.56C-5.89 11.39 -7.37 10.91 -8.67 10.37C-9.97 9.83 -11.42 8.99 -12.41 8.33C-13.40 7.67 -14.23 6.72 -14.60 6.40"/></g></svg>
<span class="t" style="left:1309.7px;top:1385.9px;font-size:28px;line-height:28px;color:#33475b;letter-spacing:0.35px;">Miley Lien (</span>
<div class="a" style="left:1458px;top:1386.1px;width:184px;height:29.6px;background:#e4988a;"></div>
<span class="t" style="left:2105.0px;top:1385.9px;font-size:28px;line-height:28px;color:#33475b;letter-spacing:2.56px;">$0</span>
<span class="t" style="left:2237.7px;top:1385.9px;font-size:28px;line-height:28px;color:#33475b;">0</span>
<div class="a" style="left:2700px;top:1369.6px;width:52.500px;height:60px;overflow:hidden;">
<span class="t" style="left:36.8px;top:16.3px;font-size:28px;line-height:28px;color:#33475b;">b</span>
</div>
<div class="a" style="left:2753px;top:951px;width:29px;height:521px;background:linear-gradient(90deg,#e6e7e9 0,#e6e7e9 1.5px,#fafafa 2px,#fafafa 55%,#eff3f9 100%);"></div>
<div class="a" style="left:2760px;top:956.5px;width:16px;height:260.3px;background:linear-gradient(90deg,#c9cacd,#e0e2e6);border-radius:8px;"></div>
<div class="a" style="left:2753px;top:948px;width:29px;height:4px;background:linear-gradient(90deg,#0b5cd6 0,#0b5cd6 40%,#6b9be6 100%);border-radius:0 4px 0 0;"></div>
<div class="a" style="left:100px;top:1442px;width:2682px;height:30px;background:linear-gradient(#e8e8e8 0,#e8e8e8 1.5px,#fafafa 2px,#fafafa 50%,#edf1f7 100%);"></div>
<div class="a" style="left:104px;top:1450px;width:981px;height:16px;background:linear-gradient(#c8c9cb,#e0e2e6);border-radius:8px;"></div>
<svg class="a" style="left:1156px;top:1492px;" width="30" height="46" viewBox="0 0 30 46"><path d="M22 6.800L6.300 22.600L22 38.400" fill="none" stroke="#b0c1d4" stroke-width="4.400" stroke-linecap="round" stroke-linejoin="round"/></svg>
<span class="t" style="left:1213.0px;top:1501.2px;font-size:27.5px;line-height:27.5px;color:#b0c1d4;font-weight:700;letter-spacing:0.22px;">Prev</span>
<div class="a" style="left:1288px;top:1488px;width:43px;height:52px;background:#e5f5f8;border:2px solid #7fd1de;border-radius:6px;"></div>
<span class="t" style="left:1301.9px;top:1501.2px;font-size:27.5px;line-height:27.5px;color:#0091ae;font-weight:700;">1</span>
<span class="t" style="left:1347.0px;top:1501.2px;font-size:27.5px;line-height:27.5px;color:#b0c1d4;font-weight:700;letter-spacing:1.60px;">Next</span>
<svg class="a" style="left:1444.2px;top:1492px;" width="30" height="46" viewBox="0 0 30 46"><path d="M8 6.800L23.700 22.600L8 38.400" fill="none" stroke="#b0c1d4" stroke-width="4.400" stroke-linecap="round" stroke-linejoin="round"/></svg>
<span class="t" style="left:1523.8px;top:1501.2px;font-size:27.5px;line-height:27.5px;color:#0091ae;font-weight:700;letter-spacing:1.32px;">25 per page</span>
<svg class="a" style="left:1702px;top:1509px;" width="18" height="11" viewBox="0 0 18 11"><path d="M1 1.500h15.500l-7.750 8z" fill="#7c98b6"/></svg>
</body></html>
